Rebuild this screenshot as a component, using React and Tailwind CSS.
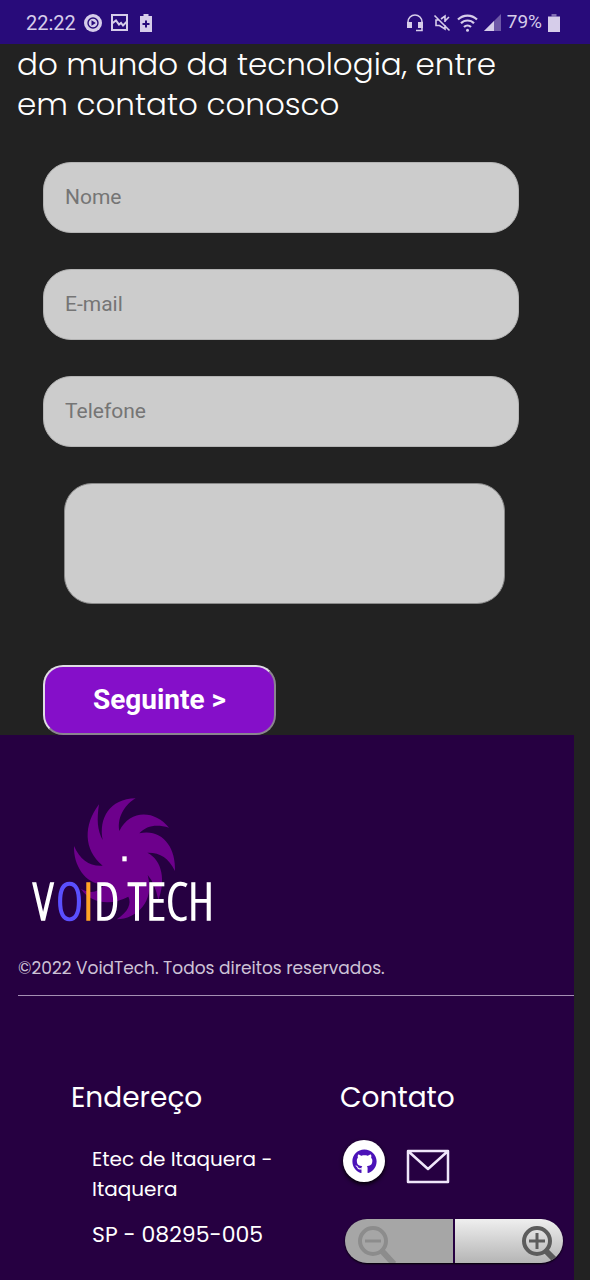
import { FaGithub } from "react-icons/fa";

function StatusBar() {
  return (
    <header className="flex h-11 items-center justify-between bg-[#280b7a] pl-[26px] pr-[30px] pt-px font-['Roboto',sans-serif] text-xl text-[#d6cdea]">
      <div className="flex items-center gap-2">
        <span>22:22</span>
        <svg className="size-[18px]" viewBox="0 0 18 18" aria-hidden="true">
          <circle cx="9" cy="9" r="9" fill="currentColor" />
          <circle cx="9" cy="9" r="5" fill="none" stroke="#280b7a" strokeWidth="1.4" />
          <path d="M7.5 6.3 11.8 9l-4.3 2.7z" fill="#280b7a" />
        </svg>
        <svg className="ml-px size-[17px]" viewBox="0 0 17 17" fill="none" stroke="currentColor" strokeWidth="2" aria-hidden="true">
          <path d="M1 1h15v15H1z" />
          <path d="M1 9.5 5 6.5l3 4 2-1.500 2 2.500 4-4" />
        </svg>
        <svg className="ml-1 h-[18px] w-3" viewBox="0 0 12 18" aria-hidden="true">
          <path d="M3.500 0h5v2H12v16H0V2h3.500z" fill="currentColor" />
          <path d="M6 6.500v7M2.500 10h7" stroke="#280b7a" strokeWidth="2" />
        </svg>
      </div>
      <div className="flex items-center gap-1.5">
        <svg className="h-[18px] w-4" viewBox="0 0 16 18" aria-hidden="true">
          <path d="M1 11V8a7 7 0 0 1 14 0v8.500H9" fill="none" stroke="currentColor" strokeWidth="1.600" />
          <path d="M0 8h5v6H0zM11 8h5v6h-5z" fill="currentColor" />
        </svg>
        <svg className="ml-1 size-[18px]" viewBox="0 0 18 18" fill="none" stroke="currentColor" strokeWidth="1.600" aria-hidden="true">
          <path d="M6 6H3v5.500h3.500L12 15V11M8 5l4-3v6M1.500 1.500l15 15M16 3l-4 4" />
        </svg>
        <svg className="h-[18px] w-[21px]" viewBox="0 0 21 18" fill="none" stroke="currentColor" strokeWidth="2.200" aria-hidden="true">
          <path d="M1 5.500a13.500 13.500 0 0 1 19 0M4 9.300a9 9 0 0 1 13 0M7 13a5 5 0 0 1 7 0" />
          <circle cx="10.500" cy="16.300" r="1.500" fill="currentColor" stroke="none" />
        </svg>
        <svg className="h-[17px] w-[17px]" viewBox="0 0 17 17" fill="currentColor" aria-hidden="true">
          <path d="M17 0v17H0z" opacity=".4" />
          <path d="M10 7v10H0z" />
        </svg>
        <span className="text-[19px]">79%</span>
        <svg className="h-[18px] w-3" viewBox="0 0 12 18" fill="currentColor" aria-hidden="true">
          <path d="M3.500 0h5v2.500h-5z" opacity=".5" />
          <path d="M0 2.500h12V18H0z" />
        </svg>
      </div>
    </header>
  );
}

function Field({ label, type }) {
  return (
    <input
      type={type}
      aria-label={label}
      placeholder={label}
      className="block h-[71px] w-full rounded-[28px] border border-[#b4b4b4] bg-[#ccc] px-[21px] pb-0.5 text-[21px] text-[#222] placeholder:text-[#757575]"
    />
  );
}

function Logo() {
  return (
    <svg className="block h-[140px] w-[220px] overflow-visible" viewBox="0 0 220 140" role="img" aria-label="Void Tech">
      <g transform="translate(2 0) scale(.33333)">
        <path
          fill="#6d008c"
          d="M248 165C236 100 268 42 347 40C320 55 290 92 298 138C330 72 405 75 447 128C408 117 380 122 358 145C425 130 468 185 465 258C445 218 420 202 382 203C428 225 437 290 415 345Q405 295 383 270C405 350 350 402 290 403C325 380 335 355 325 335C280 360 215 360 183 312Q225 335 255 298C195 300 160 240 162 183C180 225 210 245 248 242C190 195 190 120 237 58C230 105 232 135 248 165Z"
        />
        <path d="M307 214h13v15h-13z" fill="#fff" />
      </g>
      <g fontSize="52" fontFamily="'Open Sans Condensed Light', 'Barlow Condensed', 'Roboto Condensed', sans-serif" strokeWidth="1.5">
        <text x="15" y="135" fill="#fff" stroke="#fff">
          V<tspan x="38" fill="#5b50ff" stroke="#5b50ff">O</tspan><tspan x="65" fill="#ffa526" stroke="#ffa526">I</tspan><tspan x="76">D</tspan>
        </text>
        <text x="110" y="135" fill="#fff" stroke="#fff">TECH</text>
      </g>
    </svg>
  );
}

function ZoomControls() {
  return (
    <div className="flex h-11 w-[218px] gap-0.5 overflow-hidden rounded-full shadow-[0_1px_2px_#000]">
      <button type="button" aria-label="Diminuir zoom" disabled className="w-1/2 bg-[#a6a6a6] pl-1">
        <svg className="h-11 w-12" viewBox="0 0 48 44" fill="none" stroke="#8c8c8c" aria-hidden="true">
          <circle cx="24" cy="22" r="13" strokeWidth="4" />
          <path d="M16 22h16" strokeWidth="3" />
          <path d="m33 32 12 13" strokeWidth="6" />
        </svg>
      </button>
      <button type="button" aria-label="Aumentar zoom" className="flex w-1/2 justify-end bg-linear-to-b from-[#efefef] to-[#b5b5b5]">
        <svg className="h-11 w-12" viewBox="0 0 48 44" fill="none" stroke="#5c5c5c" aria-hidden="true">
          <circle cx="22" cy="22" r="13" strokeWidth="4" />
          <path d="M14 22h16M22 14v16" strokeWidth="3" />
          <path d="m31 32 10 10" strokeWidth="6" />
        </svg>
      </button>
    </div>
  );
}

export default function App() {
  return (
    <div className="min-h-screen bg-[#222] font-['Roboto',sans-serif]">
      <StatusBar />
      <main>
        <h1 className="px-[17px] font-['Poppins','Inter',sans-serif] text-[31px] font-light leading-10 text-white">
          do mundo da tecnologia, entre
          <br />
          em contato conosco
        </h1>
        <form className="flex flex-col gap-9 pl-[43px] pr-[71px] pt-[38px]" onSubmit={(e) => e.preventDefault()}>
          <Field label="Nome" type="text" />
          <Field label="E-mail" type="email" />
          <Field label="Telefone" type="tel" />
          <textarea
            aria-label="Mensagem"
            className="ml-[21px] mr-3.5 block h-[121px] resize-none rounded-[28px] border border-[#8a8a8a] bg-[#ccc] p-5 text-[21px]"
          />
          <button
            type="submit"
            className="mt-[25px] h-[70px] w-[233px] rounded-[20px] border-2 border-b-[#8b8490] border-l-[#e0dce4] border-r-[#8b8490] border-t-[#e0dce4] bg-[#850fc9] text-[28px] font-bold text-white"
          >
            Seguinte &gt;
          </button>
        </form>
      </main>
      <footer className="mr-4 bg-[#260041] pb-[17px] pl-[18px] pt-[50px] font-['Poppins','Inter',sans-serif] text-white">
        <Logo />
        <p className="mt-[31px] border-b border-[#a48fb3] pb-[15px] text-[17px] leading-6 text-[#cdc2d6]">
          ©2022 VoidTech. Todos direitos reservados.
        </p>
        <div className="grid grid-cols-[269px_1fr] pl-[53px] pt-[82px]">
          <section>
            <h2 className="text-[28px] leading-10">Endereço</h2>
            <address className="mt-[26px] pl-[21px] text-xl not-italic leading-[30px]">
              <p>Etec de Itaquera -<br />Itaquera</p>
              <p className="mt-4 text-[22px]">SP - 08295-005</p>
            </address>
          </section>
          <section>
            <h2 className="text-[28px] leading-10">Contato</h2>
            <div className="mt-[22px] flex items-start gap-[21px] pl-[3px]">
              <a href="#github" aria-label="GitHub" className="flex size-[42px] items-center justify-center rounded-full bg-white text-[#4b12b8] shadow-[0_2px_4px_#000]">
                <FaGithub className="size-[25px]" />
              </a>
              <a href="#email" aria-label="E-mail" className="mt-2">
                <svg className="h-[36px] w-[44px]" viewBox="0 0 44 36" fill="none" stroke="#f0e6fa" strokeWidth="2.500" strokeLinejoin="round" aria-hidden="true">
                  <path d="M2 3h40v31H2zM2 3l20 18L42 3" />
                </svg>
              </a>
            </div>
            <div className="mt-[35px] pl-[5px]">
              <ZoomControls />
            </div>
          </section>
        </div>
      </footer>
    </div>
  );
}
